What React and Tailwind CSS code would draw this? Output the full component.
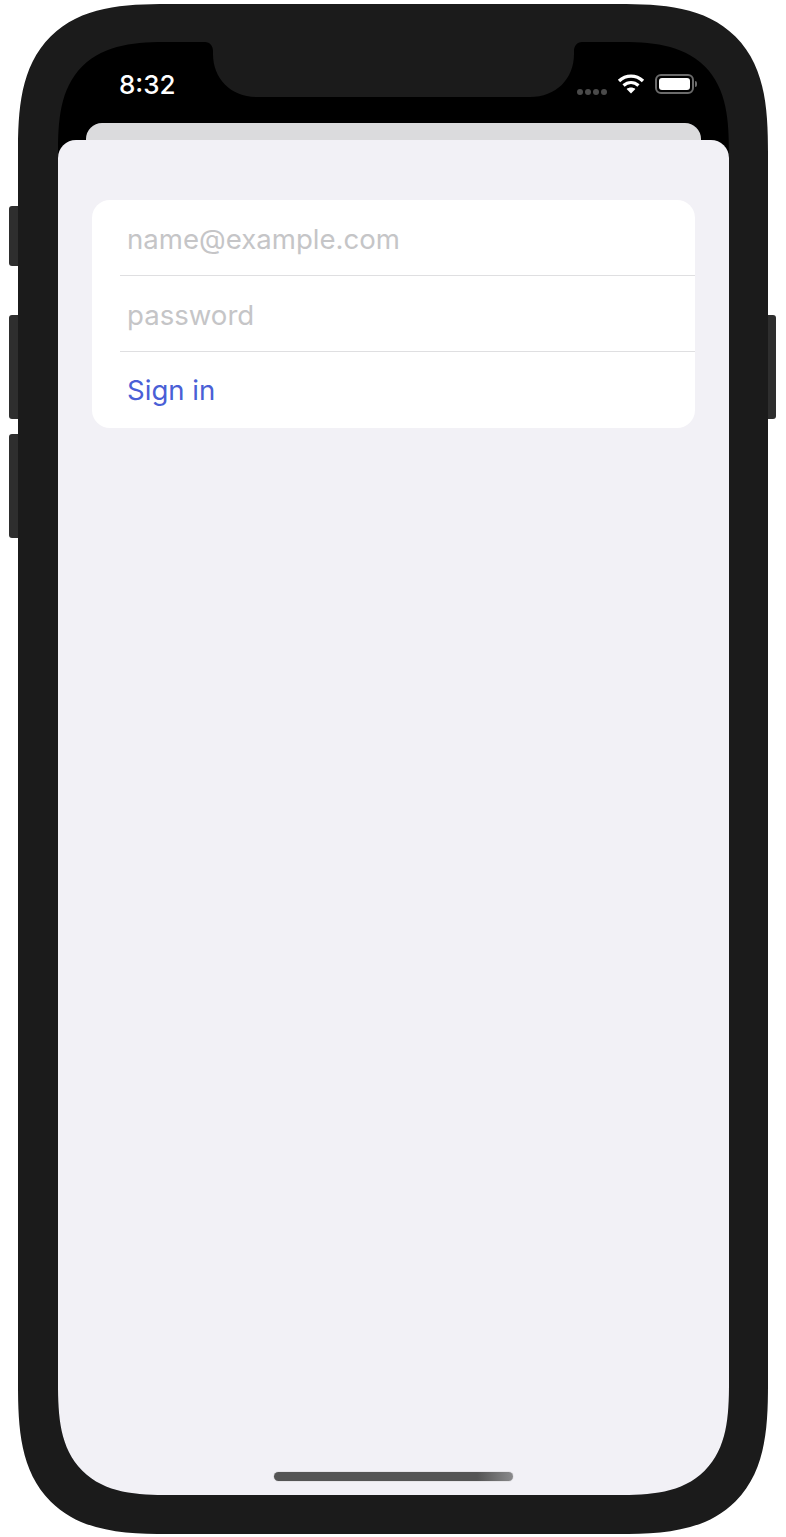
import React from 'react';

const SideButton = ({ className }) => (
  <div className={`absolute w-[10px] bg-[#2e2e2e] ${className}`} />
);

const Notch = () => (
  <svg className="absolute left-[147px] top-0" width="377" height="55" viewBox="0 0 377 55">
    <path
      d="M0 0 H369 H377 C372 0 369 4 369 9 V12 C369 37 351 55 325 55 H52 C26 55 8 37 8 12 V9 C8 4 5 0 0 0 Z"
      fill="#1b1b1b"
    />
  </svg>
);

const WifiIcon = () => (
  <svg width="28" height="21" viewBox="0 0 28 21" fill="none">
    <path d="M2 8 C9 1.5 19 1.5 26 8" stroke="#fff" strokeWidth="3.4" />
    <path d="M6.5 12.5 C11 8.5 17 8.5 21.5 12.5" stroke="#fff" strokeWidth="3.2" />
    <path d="M14 20.5 L9.6 16 C12 14 16 14 18.4 16 Z" fill="#fff" />
  </svg>
);

const BatteryIcon = () => (
  <div className="flex items-center gap-[1px] mt-[1px]">
    <div className="w-[39px] h-[20px] rounded-[6px] border-2 border-[#6b6b6b] p-[2px]">
      <div className="w-full h-full rounded-[3px] bg-white" />
    </div>
    <div className="w-[2px] h-[6px] rounded-r-[2px] bg-[#6b6b6b]" />
  </div>
);

const Dots = () => (
  <div className="flex gap-[2px] mt-[16px]">
    <div className="w-[6px] h-[6px] rounded-full bg-[#4a4a4a]" />
    <div className="w-[6px] h-[6px] rounded-full bg-[#4a4a4a]" />
    <div className="w-[6px] h-[6px] rounded-full bg-[#4a4a4a]" />
    <div className="w-[6px] h-[6px] rounded-full bg-[#4a4a4a]" />
  </div>
);

const Field = ({ placeholder, type }) => (
  <div className="h-[76px] pl-[28px]">
    <div className="h-full border-b border-[#dfdfe1] flex items-center pl-[7px] pt-[4px]">
      <input
        type={type}
        placeholder={placeholder}
        className="w-full bg-transparent outline-none text-[27.6px] placeholder:text-[#c5c5c7]"
      />
    </div>
  </div>
);

export default function App() {
  return (
    <div className="relative w-[786px] h-[1537px] bg-white pt-[4px] pl-[18px] font-['Inter',sans-serif]">
      <SideButton className="left-[9px] top-[206px] h-[60px] rounded-l-[3px]" />
      <SideButton className="left-[9px] top-[315px] h-[104px] rounded-l-[3px]" />
      <SideButton className="left-[9px] top-[434px] h-[104px] rounded-l-[3px]" />
      <SideButton className="left-[768px] top-[315px] !w-[8px] h-[104px] rounded-r-[3px]" />

      <div className="relative w-[750px] h-[1530px] bg-[#1b1b1b] rounded-[150px] [corner-shape:superellipse(1.5)] pt-[38px] pl-[40px]">
        <div className="relative w-[671px] h-[1453px] bg-black rounded-[112px] [corner-shape:superellipse(1.5)] overflow-hidden flex flex-col">
          <Notch />
          <div className="h-[81px] flex items-start justify-between pt-[28px] pl-[61px] pr-[32px]">
            <span className="text-white text-[26px] leading-[30px] font-medium">8:32</span>
            <div className="flex items-start gap-[10px] mt-[3px]">
              <Dots />
              <WifiIcon />
              <BatteryIcon />
            </div>
          </div>
          <div className="mx-[28px] h-[17px] rounded-t-[16px] bg-[#dbdbdd]" />
          <div className="relative flex-1 bg-[#f2f1f6] rounded-t-[18px] pt-[60px] px-[34px]">
            <div className="bg-white rounded-[18px] overflow-hidden">
              <Field placeholder="name@example.com" type="email" />
              <Field placeholder="password" type="password" />
              <div className="h-[76px] flex items-center pl-[35px] pt-[1px]">
                <button className="text-[27.6px] text-[#4a5fd6]">Sign in</button>
              </div>
            </div>
            <div className="absolute left-[216px] bottom-[14px] w-[239px] h-[9px] rounded-full bg-gradient-to-r from-[#555555] from-85% to-[#8a8a8c] shadow-[0_0_1px_#777777]" />
          </div>
        </div>
      </div>
    </div>
  );
}
